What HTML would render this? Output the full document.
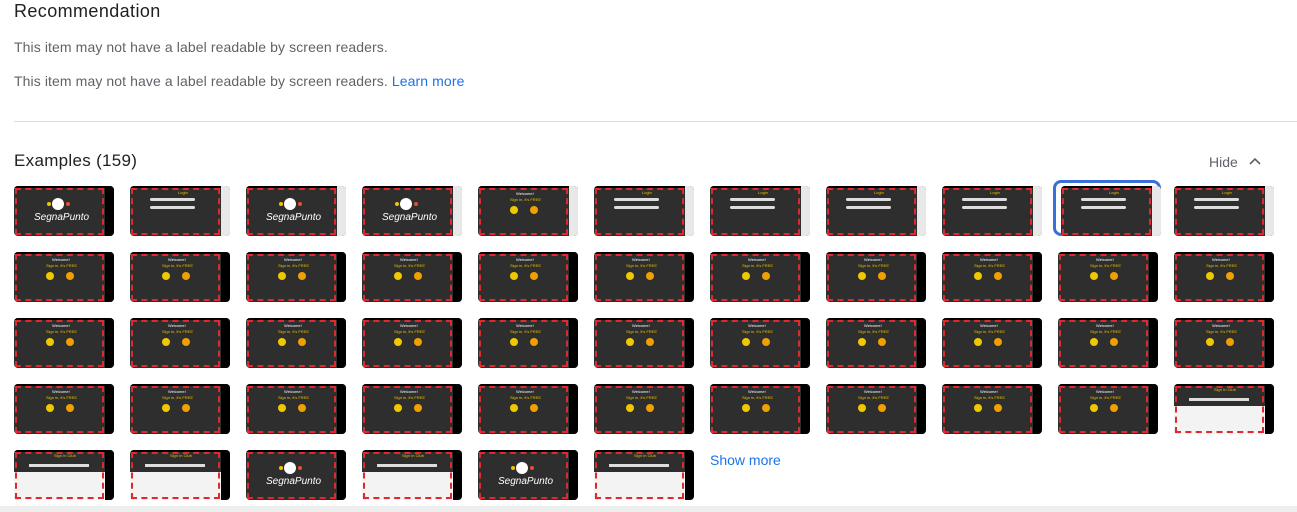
<!DOCTYPE html>
<html><head><meta charset="utf-8"><style>
body{margin:0;width:1297px;height:512px;overflow:hidden;background:#fff;font-family:"Liberation Sans",Arial,sans-serif;position:relative}
.a{position:absolute;white-space:nowrap}
h1{position:absolute;left:14px;top:1px;margin:0;font-size:18px;font-weight:normal;color:#202124;letter-spacing:0.4px}
.p{font-size:14px;color:#5f6368;left:14px;letter-spacing:0.1px}
.t{position:absolute;width:100px;height:50px;border-radius:4px;background:#2e2e2e;overflow:hidden;box-sizing:border-box}
.t .in{position:absolute;left:1px;top:2px;right:10px;bottom:1px;border:2px dashed #e0282e}
.t .rs{position:absolute;right:0;top:0;width:9px;height:50px;background:#000}
.t.l .rs{background:#e8e8e8}
.t .tb{position:absolute;left:0;top:0;right:9px;height:2px;background:#000}
.sel{position:absolute;border:3px solid #3a6fd8;border-radius:8px;width:102px;height:50px}
</style></head><body>
<h1>Recommendation</h1>
<div class="a p" style="top:39px">This item may not have a label readable by screen readers.</div>
<div class="a p" style="top:73px">This item may not have a label readable by screen readers. <span style="color:#1a73e8">Learn more</span></div>
<div class="a" style="left:14px;right:0;top:121px;height:1px;background:#dadce0"></div>
<div class="a" style="left:14px;top:151px;font-size:17px;color:#202124;letter-spacing:0.3px">Examples (159)</div>
<div class="a" style="left:1209px;top:154px;font-size:14px;color:#5f6368">Hide</div>
<svg class="a" style="left:1248px;top:155px" width="14" height="12" viewBox="0 0 14 12"><path d="M2 9 L7 4 L12 9" fill="none" stroke="#5f6368" stroke-width="1.6"/></svg>
<div class="a" style="left:710px;top:452px;font-size:14px;color:#1a73e8">Show more</div>
<div class="sel" style="left:1053px;top:180px"></div>
<div id="g"></div>
<div class="a" style="left:0;right:0;top:506px;height:6px;background:#eee"></div>
<script>
var types=[
"LFLLWKKKKKK".split(""),
"WWWWWWWWWWW".split(""),
"WWWWWWWWWWW".split(""),
"WWWWWWWWWWS".split(""),
"SSLSLS".split("")];
var lightMap={F:1,K:1};
var h="";
for(var r=0;r<types.length;r++)for(var c=0;c<types[r].length;c++){
 var t=types[r][c];var x=14+c*116,y=186+r*66;
 if(r==0&&c==9){x+=3;y+=0}
 var light=lightMap[t]||(r==0&&(c==2||c==3||c==4));
 var inner="";
 if(t=="L"){inner='<div style="position:absolute;left:38px;top:12px;width:12px;height:12px;border-radius:50%;background:#fff"></div><div style="position:absolute;left:33px;top:16px;width:4px;height:4px;border-radius:50%;background:#f5c400"></div><div style="position:absolute;left:52px;top:16px;width:4px;height:4px;border-radius:50%;background:#e5502a"></div><div style="position:absolute;left:20px;top:26px;font-size:10px;color:#fff;font-style:italic">SegnaPunto</div>';}
 else if(t=="W"){inner='<div style="position:absolute;left:38px;top:5px;font-size:4px;color:#fff">Welcome!</div><div style="position:absolute;left:32px;top:11px;font-size:4px;color:#e8c200">Sign in, it\'s FREE</div><div style="position:absolute;left:32px;top:20px;width:8px;height:8px;border-radius:50%;background:#f0c800"></div><div style="position:absolute;left:52px;top:20px;width:8px;height:8px;border-radius:50%;background:#f0a000"></div>';}
 else if(t=="K"||t=="F"){inner='<div style="position:absolute;left:20px;top:12px;width:45px;height:3px;background:#ddd;border-radius:2px"></div><div style="position:absolute;left:20px;top:20px;width:45px;height:3px;background:#ddd;border-radius:2px"></div><div style="position:absolute;left:48px;top:4px;font-size:4px;color:#e8c200">Login</div>';}
 else if(t=="S"){inner='<div style="position:absolute;left:0;right:9px;top:22px;bottom:0;background:#f3f3f3"></div><div style="position:absolute;left:40px;top:3px;font-size:4px;color:#e8c200">Sign In Club</div><div style="position:absolute;left:15px;top:14px;width:60px;height:3px;background:#ddd"></div>';}
 h+='<div class="t'+(light?' l':'')+'" style="left:'+x+'px;top:'+y+'px">'+inner+'<div class="tb"></div><div class="in"></div><div class="rs"></div></div>';
}
document.getElementById("g").innerHTML=h;
</script>
</body></html>
